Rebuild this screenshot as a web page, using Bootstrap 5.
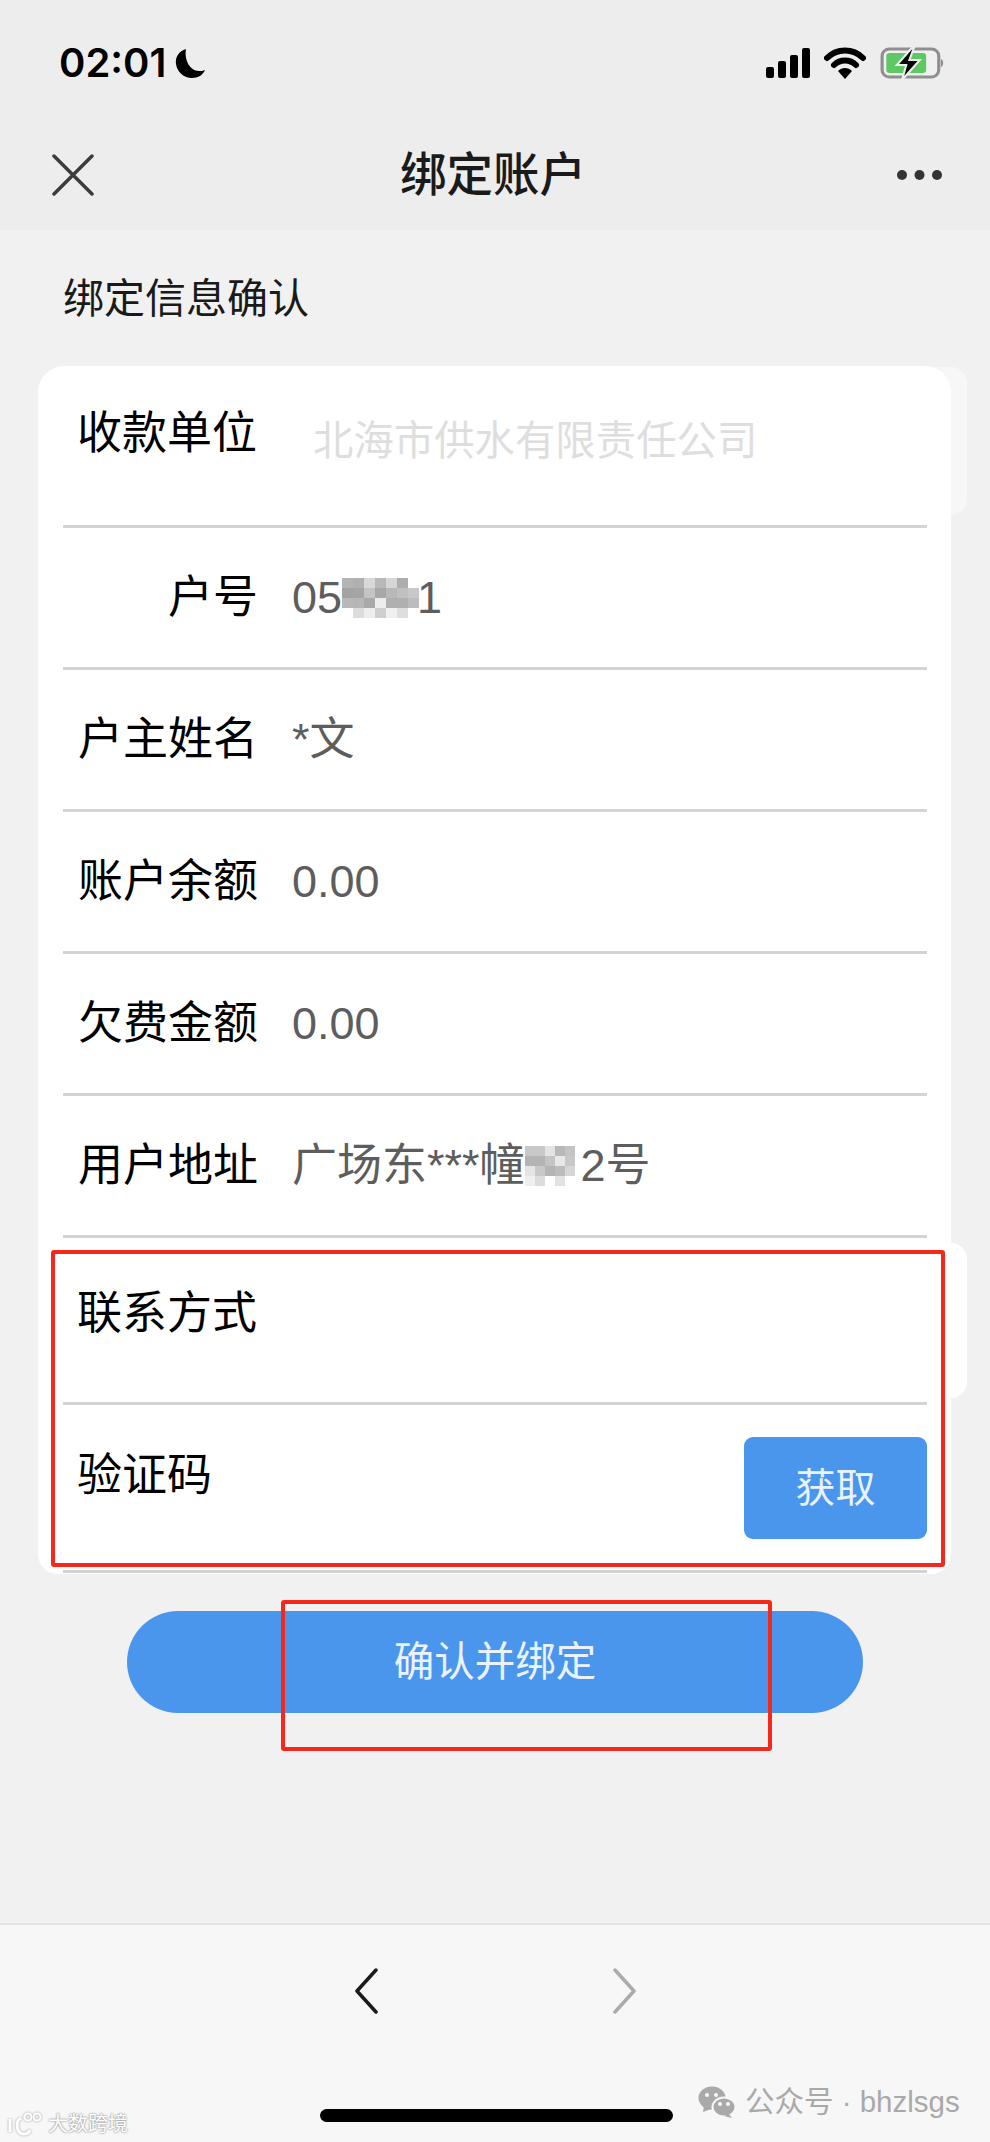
<!DOCTYPE html>
<html lang="zh-CN">
<head>
    <meta charset="UTF-8">
    <meta name="viewport" content="width=device-width, initial-scale=1.0">
    <title>绑定账户</title>
    <link href="https://cdn.jsdelivr.net/npm/bootstrap@5.3.0/dist/css/bootstrap.min.css" rel="stylesheet">
    <style>
        html, body {
            height: 2142px;
            overflow: hidden;
        }
        body {
            background: #f1f1f1;
            color: #000;
            font-family: "Liberation Sans", "Noto Sans CJK SC", sans-serif;
        }
        .phone-page {
            position: relative;
            height: 2142px;
        }
        /* status bar + title bar */
        .top-area {
            height: 230px;
            background: #ededed;
        }
        .status-row {
            height: 126px;
            padding: 45px 46px 0 59px;
        }
        .status-time {
            font-family: Inter, "Liberation Sans", sans-serif;
            font-size: 40px;
            font-weight: 600;
            line-height: 36px;
        }
        .moon-icon {
            margin: 3px 0 0 8px;
        }
        .status-icons {
            height: 36px;
            gap: 14px;
        }
        .title-row {
            height: 104px;
            padding: 0 47px 6px 52px;
        }
        .title-text {
            font-size: 46.5px;
            font-weight: 500;
            line-height: 60px;
            color: #1a1a1a;
            margin-right: 4px;
        }
        .section-title {
            font-size: 41px;
            line-height: 56px;
            color: #1a1a1a;
            padding: 41px 0 0 63px;
            height: 136px;
        }
        /* white panel with the rows */
        .form-panel {
            position: relative;
            margin: 0 39px 0 38px;
            padding: 0 24px 0 25px;
            height: 1208px;
            background: #fff;
            border-radius: 26px 26px 20px 20px;
        }
        .panel-tab {
            position: absolute;
            right: -16px;
            width: 40px;
            background: #f7f7f7;
            border-radius: 0 16px 16px 0;
            z-index: -1;
        }
        .tab-first { top: 1px; height: 148px; }
        .tab-second { top: 877px; height: 155px; background: #fff; }
        .info-row {
            position: relative;
            border-bottom: 3px solid #d3d3d3;
            font-size: 45px;
            line-height: 60px;
        }
        .row-first { height: 162px; padding-top: 38px; }
        .row-plain { height: 142px; padding-top: 40px; }
        .row-contact { height: 167px; padding-top: 46px; }
        .row-code { height: 168px; padding-top: 41px; }
        .row-label {
            width: 195px;
            padding-left: 14px;
            text-align: right;
            flex-shrink: 0;
        }
        .label-left { text-align: left; }
        .row-value {
            margin-left: 34px;
            color: #5d5d5d;
            white-space: nowrap;
        }
        .value-muted {
            color: #dedede;
            margin-left: 55px;
            margin-top: 7px;
            font-size: 40.4px;
        }
        /* mosaic over private digits */
        .blur-block {
            display: inline-grid;
            grid-auto-rows: 10px;
            vertical-align: top;
            margin-top: 10px;
        }
        .blur-no { grid-template-columns: repeat(7, 11px); margin-right: -2px; }
        .blur-addr { grid-template-columns: repeat(6, 10px); margin-right: -4px; }
        .get-code {
            position: absolute;
            right: 0;
            top: 32px;
            width: 183px;
            height: 102px;
            background: #4a96ed;
            border: 0;
            border-radius: 9px;
            color: #eaf3fd;
            font-size: 40px;
        }
        .confirm-btn {
            display: block;
            width: 736px;
            height: 102px;
            margin: 37px 0 0 127px;
            background: #4a96ed;
            border: 0;
            border-radius: 51px;
            color: #eaf3fd;
            font-size: 40.5px;
        }
        /* red marks drawn on the screenshot */
        .red-mark {
            position: absolute;
            border: 4px solid #f6281c;
            border-radius: 3px;
            z-index: 3;
            pointer-events: none;
        }
        .mark-form { left: 51px; top: 1250px; width: 894px; height: 317px; }
        .mark-btn { left: 281px; top: 1600px; width: 491px; height: 151px; }
        /* bottom toolbar */
        .bottom-bar {
            position: absolute;
            left: 0;
            right: 0;
            top: 1923px;
            bottom: 0;
            background: #f7f7f7;
            border-top: 2px solid #e4e4e4;
        }
        .nav-arrows {
            padding-top: 43px;
            gap: 235px;
        }
        .home-line {
            position: absolute;
            left: 320px;
            top: 184px;
            width: 353px;
            height: 13px;
            background: #000;
            border-radius: 7px;
        }
        .mark-wechat {
            position: absolute;
            left: 698px;
            top: 2082px;
            color: #a9a9a9;
            font-size: 29.5px;
            line-height: 40px;
            gap: 9px;
            white-space: nowrap;
        }
        .mark-site {
            position: absolute;
            left: 8px;
            top: 2108px;
            color: #fff;
            font-size: 20px;
            line-height: 32px;
            gap: 5px;
            text-shadow: 0 0 2px #9a9a9a, 0 0 2px #9a9a9a;
        }
        .site-logo {
            filter: drop-shadow(0 0 1px #9a9a9a);
        }
    </style>
</head>
<body>
    <div class="phone-page">
        <div class="top-area">
            <div class="status-row d-flex justify-content-between">
                <div class="d-flex align-items-start">
                    <span class="status-time">02:01</span>
                    <svg class="moon-icon" width="32" height="32" viewBox="0 0 32 32"><path d="M12 1C5 3 1 9 2 16c1 8 8 14 16 14 6 0 11-3 13-8-2 1-4 1-6 1-9 0-15-11-13-22z" fill="#000"/></svg>
                </div>
                <div class="status-icons d-flex align-items-center">
                    <svg width="44" height="30" viewBox="0 0 44 30"><rect x="0" y="19" width="8" height="11" rx="2"/><rect x="12" y="13" width="8" height="17" rx="2"/><rect x="24" y="7" width="8" height="23" rx="2"/><rect x="36" y="0" width="8" height="30" rx="2"/></svg>
                    <svg width="42" height="32" viewBox="0 0 42 32"><path d="M3 11C13 1 29 1 39 11" fill="none" stroke="#000" stroke-width="6" stroke-linecap="round"/><path d="M10 18c6-6 16-6 22 0" fill="none" stroke="#000" stroke-width="6" stroke-linecap="round"/><path d="M14 24c4-4 10-4 14 0l-7 8z" fill="#000"/></svg>
                    <svg width="64" height="34" viewBox="0 0 61 34" preserveAspectRatio="none"><rect x="2" y="3" width="54" height="28" rx="7" fill="#f0f0f0" stroke="#8f8f8f" stroke-width="3"/><rect x="6" y="7" width="38" height="20" rx="3" fill="#5ec864"/><path d="M58 13c3 1 3 7 0 8z" fill="#8f8f8f"/><path d="M32 0L16 19h9l-4 15 17-20h-10l5-14z" fill="#000" stroke="#ededed" stroke-width="2"/></svg>
                </div>
            </div>
            <div class="title-row d-flex justify-content-between align-items-center">
                <svg width="42" height="42" viewBox="0 0 42 42"><path d="M2 2l38 38M40 2L2 40" stroke="#3c3c3c" stroke-width="3.5" fill="none" stroke-linecap="round"/></svg>
                <span class="title-text">绑定账户</span>
                <svg width="47" height="12" viewBox="0 0 47 12" fill="#333"><circle cx="6" cy="6" r="5"/><circle cx="23.5" cy="6" r="5"/><circle cx="41" cy="6" r="5"/></svg>
            </div>
        </div>

        <div class="section-title">绑定信息确认</div>

        <div class="form-panel">
            <div class="panel-tab tab-first"></div>
            <div class="panel-tab tab-second"></div>

            <div class="info-row row-first d-flex">
                <div class="row-label label-left">收款单位</div>
                <div class="row-value value-muted">北海市供水有限责任公司</div>
            </div>
            <div class="info-row row-plain d-flex">
                <div class="row-label">户号</div>
                <div class="row-value">05<span id="blurNo" class="blur-block blur-no"></span>1</div>
            </div>
            <div class="info-row row-plain d-flex">
                <div class="row-label">户主姓名</div>
                <div class="row-value">*文</div>
            </div>
            <div class="info-row row-plain d-flex">
                <div class="row-label">账户余额</div>
                <div class="row-value">0.00</div>
            </div>
            <div class="info-row row-plain d-flex">
                <div class="row-label">欠费金额</div>
                <div class="row-value">0.00</div>
            </div>
            <div class="info-row row-plain d-flex">
                <div class="row-label">用户地址</div>
                <div class="row-value">广场东***幢<span id="blurAddr" class="blur-block blur-addr"></span>2号</div>
            </div>
            <div class="info-row row-contact d-flex">
                <div class="row-label label-left">联系方式</div>
            </div>
            <div class="info-row row-code d-flex">
                <div class="row-label label-left">验证码</div>
                <button type="button" class="btn get-code">获取</button>
            </div>
        </div>

        <button type="button" class="btn confirm-btn">确认并绑定</button>

        <div class="red-mark mark-form"></div>
        <div class="red-mark mark-btn"></div>

        <div class="bottom-bar">
            <div class="nav-arrows d-flex justify-content-center">
                <svg width="24" height="46" viewBox="0 0 24 46"><path d="M22 2L3 23l19 21" fill="none" stroke="#1b1b1b" stroke-width="3.5" stroke-linecap="round" stroke-linejoin="round"/></svg>
                <svg width="24" height="46" viewBox="0 0 24 46"><path d="M2 2l19 21L2 44" fill="none" stroke="#ababab" stroke-width="3.5" stroke-linecap="round" stroke-linejoin="round"/></svg>
            </div>
            <div class="home-line"></div>
        </div>

        <div class="mark-wechat d-flex align-items-center">
            <svg width="38" height="32" viewBox="0 0 38 32" fill="#a9a9a9"><ellipse cx="14" cy="12" rx="13.5" ry="11.5"/><path d="M6 20l-1 6 8-3z"/><ellipse cx="26" cy="21" rx="11.5" ry="9.5" stroke="#f7f7f7" stroke-width="2"/><path d="M31 28l3 4-8-2z"/><circle cx="9" cy="9" r="2" fill="#f7f7f7"/><circle cx="18" cy="9" r="2" fill="#f7f7f7"/><circle cx="22" cy="18" r="2" fill="#f7f7f7"/><circle cx="30" cy="18" r="2" fill="#f7f7f7"/></svg>
            <span>公众号 · bhzlsgs</span>
        </div>
        <div class="mark-site d-flex align-items-center">
            <svg class="site-logo" width="35" height="24" viewBox="0 0 35 24" fill="none" stroke="#fff" stroke-width="3"><path d="M2 7v13M13 6c-6 3-5 16 3 16 3 0 5-1 6-4"/><circle cx="20" cy="5" r="3.5" stroke-width="2"/><circle cx="29" cy="5" r="3.5" stroke-width="2"/></svg>
            <span>大数跨境</span>
        </div>
    </div>

    <script>
        // mosaic cells over the hidden digits
        const noCells = ['#b4b4b4','#b0b0b0','#d8d8d8','#b8b8b8','#d6d6d6','#adadad','#fff',
                         '#a3a3a3','#a5a5a5','#c4c4c4','#a8a8a8','#b8b8b8','#c0c0c0','#c8c8c8',
                         '#b8b8b8','#b6b6b6','#a9a9a9','#ededed','#b0b0b0','#b0b0b0','#bcbcbc',
                         '#fff','#dcdcdc','#eeeeee','#cfcfcf','#f0f0f0','#dedede','#fff'];
        const addrCells = ['#c8c8c8','#c8c8c8','#e4e4e4','#b8b8b8','#c4c4c4','#fff',
                           '#b4b4b4','#b4b4b4','#c4c4c4','#e8e8e8','#c8c8c8','#fff',
                           '#e4e4e4','#c8c8c8','#b4b4b4','#bcbcbc','#d6d6d6','#fff',
                           '#eeeeee','#dcdcdc','#fff','#e2e2e2','#fff','#fff'];
        function fillCells(id, cells) {
            const box = document.getElementById(id);
            cells.forEach(function(c) {
                const s = document.createElement('span');
                s.style.background = c;
                box.appendChild(s);
            });
        }
        fillCells('blurNo', noCells);
        fillCells('blurAddr', addrCells);
    </script>
    <script src="https://cdn.jsdelivr.net/npm/bootstrap@5.3.0/dist/js/bootstrap.bundle.min.js"></script>
</body>
</html>
